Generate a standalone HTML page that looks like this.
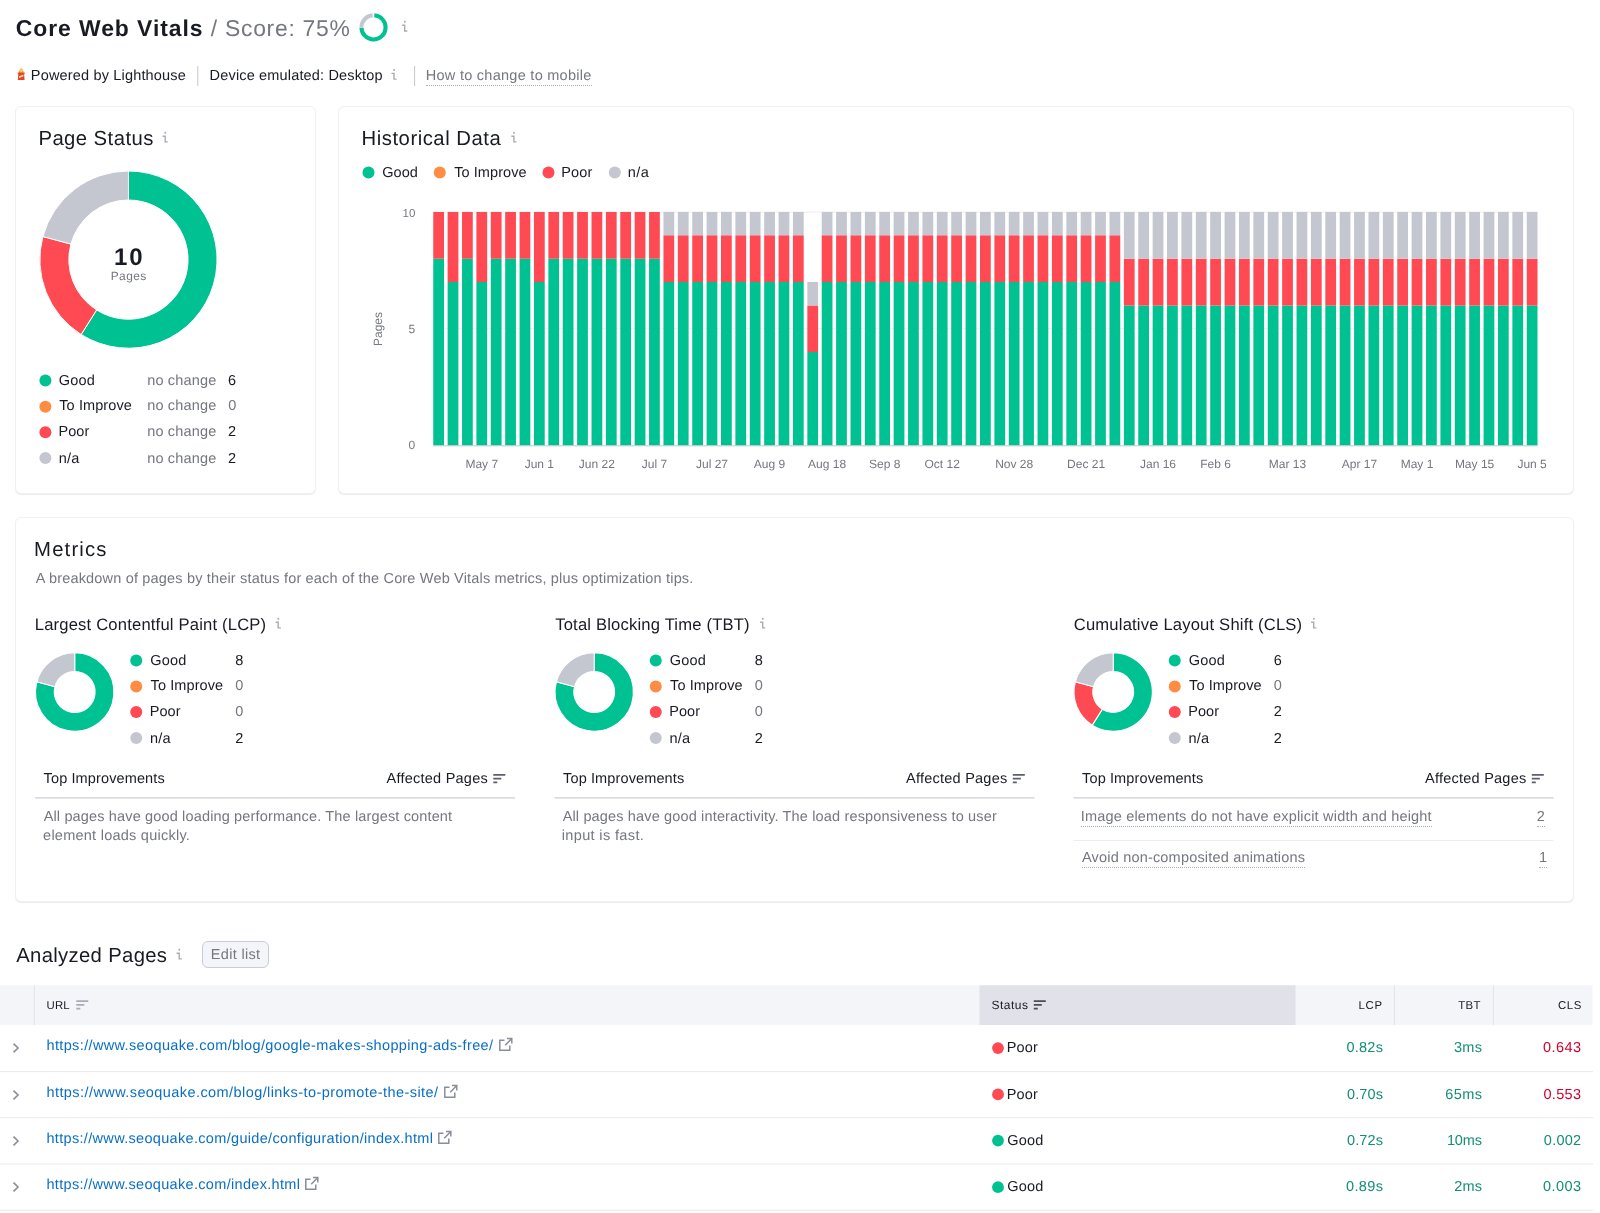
<!DOCTYPE html>
<html lang="en"><head><meta charset="utf-8"><title>Core Web Vitals</title>
<style>
html,body{margin:0;padding:0;background:#fff}
body{width:1600px;height:1213px;position:relative;overflow:hidden;font-family:"Liberation Sans", sans-serif;color:#191b23;text-rendering:geometricPrecision}
.txt{position:absolute;left:0;top:0;width:1600px;height:1213px;will-change:transform}
.t{position:absolute;white-space:nowrap;line-height:1;display:block}
.card{position:absolute;background:#fff;border:1px solid #f1f1f4;border-radius:6px;box-shadow:0 1px 0 #ededf0;box-sizing:border-box}
.btn{position:absolute;left:202.3px;top:941.2px;width:67.2px;height:27px;box-sizing:border-box;border:1px solid #c9ccd4;border-radius:6px;background:#f4f5f9}
svg{position:absolute;left:0;top:0;will-change:transform}
</style></head><body>
<div class="card" style="left:14.6px;top:106px;width:301.2px;height:388px"></div>
<div class="card" style="left:338px;top:106px;width:1236px;height:388px"></div>
<div class="card" style="left:15px;top:517px;width:1559px;height:385px"></div>
<div class="btn"></div>
<svg width="1600" height="1213" viewBox="0 0 1600 1213"><circle cx="373.5" cy="27.4" r="12.1" fill="none" stroke="#c4c7cf" stroke-width="4" stroke-dasharray="17.51 76.026542216873" transform="rotate(182 373.5 27.4)"/><circle cx="373.5" cy="27.4" r="12.1" fill="none" stroke="#00c192" stroke-width="4" stroke-dasharray="55.52 76.026542216873" transform="rotate(-86 373.5 27.4)"/><circle cx="404.80" cy="21.80" r="1" fill="#a9abb6"/><path d="M402.10 25.30h2.6v5.7h2.6" fill="none" stroke="#a9abb6" stroke-width="1.4"/><g transform="translate(17.6,67.6) scale(1,1.03)"><path d="M1.3 3.8Q3.6 -2.3 5.9 3.8L6 5H1.2Z" fill="#f29a3c"/><circle cx="3.6" cy="2.9" r="1.4" fill="#ffd65c"/><path d="M0.2 4.7h6.8v1.8h-0.5l0.5 5.6h-6.8l0.5-5.6h-0.5z" fill="#e8451c"/><path d="M1.4 8.6l4.4-1.9v1.6l-4.4 1.9z" fill="#fff" opacity=".9"/></g><path d="M197.8 66v20M414.6 66v20" stroke="#c4c7cf" stroke-width="1"/><circle cx="394.10" cy="69.90" r="1" fill="#a9abb6"/><path d="M391.40 73.40h2.6v5.7h2.6" fill="none" stroke="#a9abb6" stroke-width="1.4"/><circle cx="165.30" cy="132.70" r="1" fill="#a9abb6"/><path d="M162.60 136.20h2.6v5.7h2.6" fill="none" stroke="#a9abb6" stroke-width="1.4"/><path d="M128.45 171.00A88.6 88.6 0 1 1 81.12 334.50L96.61 309.98A59.6 59.6 0 1 0 128.45 200.00Z" fill="#00c192" stroke="#fff" stroke-width="1"/><path d="M81.12 334.50A88.6 88.6 0 0 1 42.90 236.54L70.90 244.09A59.6 59.6 0 0 0 96.61 309.98Z" fill="#ff4953" stroke="#fff" stroke-width="1"/><path d="M42.90 236.54A88.6 88.6 0 0 1 128.45 171.00L128.45 200.00A59.6 59.6 0 0 0 70.90 244.09Z" fill="#c4c7cf" stroke="#fff" stroke-width="1"/><circle cx="45.4" cy="380.6" r="6" fill="#00c192"/><circle cx="45.4" cy="406.7" r="6" fill="#ff8c43"/><circle cx="45.4" cy="432.2" r="6" fill="#ff4953"/><circle cx="45.4" cy="458.1" r="6" fill="#c4c7cf"/><circle cx="514.00" cy="132.70" r="1" fill="#a9abb6"/><path d="M511.30 136.20h2.6v5.7h2.6" fill="none" stroke="#a9abb6" stroke-width="1.4"/><circle cx="368.5" cy="172.5" r="6" fill="#00c192"/><circle cx="439.75" cy="172.5" r="6" fill="#ff8c43"/><circle cx="548.5" cy="172.5" r="6" fill="#ff4953"/><circle cx="614.8" cy="172.5" r="6" fill="#c4c7cf"/><path d="M433.25 212.0H1537.5M433.25 328.75H1537.5" stroke="#ececf0" stroke-width="1"/><path d="M433.25 445.5v-186.80h10.75v186.80zM447.64 445.5v-163.45h10.75v163.45zM462.03 445.5v-186.80h10.75v186.80zM476.41 445.5v-163.45h10.75v163.45zM490.80 445.5v-186.80h10.75v186.80zM505.19 445.5v-186.80h10.75v186.80zM519.58 445.5v-186.80h10.75v186.80zM533.97 445.5v-163.45h10.75v163.45zM548.36 445.5v-186.80h10.75v186.80zM562.74 445.5v-186.80h10.75v186.80zM577.13 445.5v-186.80h10.75v186.80zM591.52 445.5v-186.80h10.75v186.80zM605.91 445.5v-186.80h10.75v186.80zM620.30 445.5v-186.80h10.75v186.80zM634.68 445.5v-186.80h10.75v186.80zM649.07 445.5v-186.80h10.75v186.80zM663.46 445.5v-163.45h10.75v163.45zM677.85 445.5v-163.45h10.75v163.45zM692.24 445.5v-163.45h10.75v163.45zM706.62 445.5v-163.45h10.75v163.45zM721.01 445.5v-163.45h10.75v163.45zM735.40 445.5v-163.45h10.75v163.45zM749.79 445.5v-163.45h10.75v163.45zM764.18 445.5v-163.45h10.75v163.45zM778.57 445.5v-163.45h10.75v163.45zM792.95 445.5v-163.45h10.75v163.45zM807.34 445.5v-93.40h10.75v93.40zM821.73 445.5v-163.45h10.75v163.45zM836.12 445.5v-163.45h10.75v163.45zM850.51 445.5v-163.45h10.75v163.45zM864.89 445.5v-163.45h10.75v163.45zM879.28 445.5v-163.45h10.75v163.45zM893.67 445.5v-163.45h10.75v163.45zM908.06 445.5v-163.45h10.75v163.45zM922.45 445.5v-163.45h10.75v163.45zM936.84 445.5v-163.45h10.75v163.45zM951.22 445.5v-163.45h10.75v163.45zM965.61 445.5v-163.45h10.75v163.45zM980.00 445.5v-163.45h10.75v163.45zM994.39 445.5v-163.45h10.75v163.45zM1008.78 445.5v-163.45h10.75v163.45zM1023.16 445.5v-163.45h10.75v163.45zM1037.55 445.5v-163.45h10.75v163.45zM1051.94 445.5v-163.45h10.75v163.45zM1066.33 445.5v-163.45h10.75v163.45zM1080.72 445.5v-163.45h10.75v163.45zM1095.11 445.5v-163.45h10.75v163.45zM1109.49 445.5v-163.45h10.75v163.45zM1123.88 445.5v-140.10h10.75v140.10zM1138.27 445.5v-140.10h10.75v140.10zM1152.66 445.5v-140.10h10.75v140.10zM1167.05 445.5v-140.10h10.75v140.10zM1181.43 445.5v-140.10h10.75v140.10zM1195.82 445.5v-140.10h10.75v140.10zM1210.21 445.5v-140.10h10.75v140.10zM1224.60 445.5v-140.10h10.75v140.10zM1238.99 445.5v-140.10h10.75v140.10zM1253.38 445.5v-140.10h10.75v140.10zM1267.76 445.5v-140.10h10.75v140.10zM1282.15 445.5v-140.10h10.75v140.10zM1296.54 445.5v-140.10h10.75v140.10zM1310.93 445.5v-140.10h10.75v140.10zM1325.32 445.5v-140.10h10.75v140.10zM1339.70 445.5v-140.10h10.75v140.10zM1354.09 445.5v-140.10h10.75v140.10zM1368.48 445.5v-140.10h10.75v140.10zM1382.87 445.5v-140.10h10.75v140.10zM1397.26 445.5v-140.10h10.75v140.10zM1411.64 445.5v-140.10h10.75v140.10zM1426.03 445.5v-140.10h10.75v140.10zM1440.42 445.5v-140.10h10.75v140.10zM1454.81 445.5v-140.10h10.75v140.10zM1469.20 445.5v-140.10h10.75v140.10zM1483.59 445.5v-140.10h10.75v140.10zM1497.97 445.5v-140.10h10.75v140.10zM1512.36 445.5v-140.10h10.75v140.10zM1526.75 445.5v-140.10h10.75v140.10z" fill="#00c192"/><path d="M433.25 258.70v-46.70h10.75v46.70zM447.64 282.05v-70.05h10.75v70.05zM462.03 258.70v-46.70h10.75v46.70zM476.41 282.05v-70.05h10.75v70.05zM490.80 258.70v-46.70h10.75v46.70zM505.19 258.70v-46.70h10.75v46.70zM519.58 258.70v-46.70h10.75v46.70zM533.97 282.05v-70.05h10.75v70.05zM548.36 258.70v-46.70h10.75v46.70zM562.74 258.70v-46.70h10.75v46.70zM577.13 258.70v-46.70h10.75v46.70zM591.52 258.70v-46.70h10.75v46.70zM605.91 258.70v-46.70h10.75v46.70zM620.30 258.70v-46.70h10.75v46.70zM634.68 258.70v-46.70h10.75v46.70zM649.07 258.70v-46.70h10.75v46.70zM663.46 282.05v-46.70h10.75v46.70zM677.85 282.05v-46.70h10.75v46.70zM692.24 282.05v-46.70h10.75v46.70zM706.62 282.05v-46.70h10.75v46.70zM721.01 282.05v-46.70h10.75v46.70zM735.40 282.05v-46.70h10.75v46.70zM749.79 282.05v-46.70h10.75v46.70zM764.18 282.05v-46.70h10.75v46.70zM778.57 282.05v-46.70h10.75v46.70zM792.95 282.05v-46.70h10.75v46.70zM807.34 352.10v-46.70h10.75v46.70zM821.73 282.05v-46.70h10.75v46.70zM836.12 282.05v-46.70h10.75v46.70zM850.51 282.05v-46.70h10.75v46.70zM864.89 282.05v-46.70h10.75v46.70zM879.28 282.05v-46.70h10.75v46.70zM893.67 282.05v-46.70h10.75v46.70zM908.06 282.05v-46.70h10.75v46.70zM922.45 282.05v-46.70h10.75v46.70zM936.84 282.05v-46.70h10.75v46.70zM951.22 282.05v-46.70h10.75v46.70zM965.61 282.05v-46.70h10.75v46.70zM980.00 282.05v-46.70h10.75v46.70zM994.39 282.05v-46.70h10.75v46.70zM1008.78 282.05v-46.70h10.75v46.70zM1023.16 282.05v-46.70h10.75v46.70zM1037.55 282.05v-46.70h10.75v46.70zM1051.94 282.05v-46.70h10.75v46.70zM1066.33 282.05v-46.70h10.75v46.70zM1080.72 282.05v-46.70h10.75v46.70zM1095.11 282.05v-46.70h10.75v46.70zM1109.49 282.05v-46.70h10.75v46.70zM1123.88 305.40v-46.70h10.75v46.70zM1138.27 305.40v-46.70h10.75v46.70zM1152.66 305.40v-46.70h10.75v46.70zM1167.05 305.40v-46.70h10.75v46.70zM1181.43 305.40v-46.70h10.75v46.70zM1195.82 305.40v-46.70h10.75v46.70zM1210.21 305.40v-46.70h10.75v46.70zM1224.60 305.40v-46.70h10.75v46.70zM1238.99 305.40v-46.70h10.75v46.70zM1253.38 305.40v-46.70h10.75v46.70zM1267.76 305.40v-46.70h10.75v46.70zM1282.15 305.40v-46.70h10.75v46.70zM1296.54 305.40v-46.70h10.75v46.70zM1310.93 305.40v-46.70h10.75v46.70zM1325.32 305.40v-46.70h10.75v46.70zM1339.70 305.40v-46.70h10.75v46.70zM1354.09 305.40v-46.70h10.75v46.70zM1368.48 305.40v-46.70h10.75v46.70zM1382.87 305.40v-46.70h10.75v46.70zM1397.26 305.40v-46.70h10.75v46.70zM1411.64 305.40v-46.70h10.75v46.70zM1426.03 305.40v-46.70h10.75v46.70zM1440.42 305.40v-46.70h10.75v46.70zM1454.81 305.40v-46.70h10.75v46.70zM1469.20 305.40v-46.70h10.75v46.70zM1483.59 305.40v-46.70h10.75v46.70zM1497.97 305.40v-46.70h10.75v46.70zM1512.36 305.40v-46.70h10.75v46.70zM1526.75 305.40v-46.70h10.75v46.70z" fill="#ff4953"/><path d="M663.46 235.35v-23.35h10.75v23.35zM677.85 235.35v-23.35h10.75v23.35zM692.24 235.35v-23.35h10.75v23.35zM706.62 235.35v-23.35h10.75v23.35zM721.01 235.35v-23.35h10.75v23.35zM735.40 235.35v-23.35h10.75v23.35zM749.79 235.35v-23.35h10.75v23.35zM764.18 235.35v-23.35h10.75v23.35zM778.57 235.35v-23.35h10.75v23.35zM792.95 235.35v-23.35h10.75v23.35zM807.34 305.40v-23.35h10.75v23.35zM821.73 235.35v-23.35h10.75v23.35zM836.12 235.35v-23.35h10.75v23.35zM850.51 235.35v-23.35h10.75v23.35zM864.89 235.35v-23.35h10.75v23.35zM879.28 235.35v-23.35h10.75v23.35zM893.67 235.35v-23.35h10.75v23.35zM908.06 235.35v-23.35h10.75v23.35zM922.45 235.35v-23.35h10.75v23.35zM936.84 235.35v-23.35h10.75v23.35zM951.22 235.35v-23.35h10.75v23.35zM965.61 235.35v-23.35h10.75v23.35zM980.00 235.35v-23.35h10.75v23.35zM994.39 235.35v-23.35h10.75v23.35zM1008.78 235.35v-23.35h10.75v23.35zM1023.16 235.35v-23.35h10.75v23.35zM1037.55 235.35v-23.35h10.75v23.35zM1051.94 235.35v-23.35h10.75v23.35zM1066.33 235.35v-23.35h10.75v23.35zM1080.72 235.35v-23.35h10.75v23.35zM1095.11 235.35v-23.35h10.75v23.35zM1109.49 235.35v-23.35h10.75v23.35zM1123.88 258.70v-46.70h10.75v46.70zM1138.27 258.70v-46.70h10.75v46.70zM1152.66 258.70v-46.70h10.75v46.70zM1167.05 258.70v-46.70h10.75v46.70zM1181.43 258.70v-46.70h10.75v46.70zM1195.82 258.70v-46.70h10.75v46.70zM1210.21 258.70v-46.70h10.75v46.70zM1224.60 258.70v-46.70h10.75v46.70zM1238.99 258.70v-46.70h10.75v46.70zM1253.38 258.70v-46.70h10.75v46.70zM1267.76 258.70v-46.70h10.75v46.70zM1282.15 258.70v-46.70h10.75v46.70zM1296.54 258.70v-46.70h10.75v46.70zM1310.93 258.70v-46.70h10.75v46.70zM1325.32 258.70v-46.70h10.75v46.70zM1339.70 258.70v-46.70h10.75v46.70zM1354.09 258.70v-46.70h10.75v46.70zM1368.48 258.70v-46.70h10.75v46.70zM1382.87 258.70v-46.70h10.75v46.70zM1397.26 258.70v-46.70h10.75v46.70zM1411.64 258.70v-46.70h10.75v46.70zM1426.03 258.70v-46.70h10.75v46.70zM1440.42 258.70v-46.70h10.75v46.70zM1454.81 258.70v-46.70h10.75v46.70zM1469.20 258.70v-46.70h10.75v46.70zM1483.59 258.70v-46.70h10.75v46.70zM1497.97 258.70v-46.70h10.75v46.70zM1512.36 258.70v-46.70h10.75v46.70zM1526.75 258.70v-46.70h10.75v46.70z" fill="#c4c7cf"/><path d="M433.25 445.8H1537.5" stroke="#c4c7cf" stroke-width="1"/><g font-family='"Liberation Sans", sans-serif' font-size="12" fill="#75777f"><text x="481.79" y="468.3" text-anchor="middle">May 7</text><text x="539.34" y="468.3" text-anchor="middle">Jun 1</text><text x="596.89" y="468.3" text-anchor="middle">Jun 22</text><text x="654.45" y="468.3" text-anchor="middle">Jul 7</text><text x="712.00" y="468.3" text-anchor="middle">Jul 27</text><text x="769.55" y="468.3" text-anchor="middle">Aug 9</text><text x="827.11" y="468.3" text-anchor="middle">Aug 18</text><text x="884.66" y="468.3" text-anchor="middle">Sep 8</text><text x="942.21" y="468.3" text-anchor="middle">Oct 12</text><text x="1014.15" y="468.3" text-anchor="middle">Nov 28</text><text x="1086.09" y="468.3" text-anchor="middle">Dec 21</text><text x="1158.03" y="468.3" text-anchor="middle">Jan 16</text><text x="1215.59" y="468.3" text-anchor="middle">Feb 6</text><text x="1287.53" y="468.3" text-anchor="middle">Mar 13</text><text x="1359.47" y="468.3" text-anchor="middle">Apr 17</text><text x="1417.02" y="468.3" text-anchor="middle">May 1</text><text x="1474.57" y="468.3" text-anchor="middle">May 15</text><text x="1532.12" y="468.3" text-anchor="middle">Jun 5</text><text transform="translate(382.3,329) rotate(-90)" text-anchor="middle" font-size="12">Pages</text></g><path d="M74.70 652.80A39.2 39.2 0 1 1 36.86 681.78L55.01 686.68A20.4 20.4 0 1 0 74.70 671.60Z" fill="#00c192" stroke="#fff" stroke-width="1.1"/><path d="M36.86 681.78A39.2 39.2 0 0 1 74.70 652.80L74.70 671.60A20.4 20.4 0 0 0 55.01 686.68Z" fill="#c4c7cf" stroke="#fff" stroke-width="1.1"/><circle cx="136.25" cy="660.6" r="6" fill="#00c192"/><circle cx="136.25" cy="686.6" r="6" fill="#ff8c43"/><circle cx="136.25" cy="711.9" r="6" fill="#ff4953"/><circle cx="136.25" cy="738.1" r="6" fill="#c4c7cf"/><circle cx="278.30" cy="618.70" r="1" fill="#a9abb6"/><path d="M275.60 622.20h2.6v5.7h2.6" fill="none" stroke="#a9abb6" stroke-width="1.4"/><path d="M493.3 774.9h12M493.3 778.6h8M493.3 782.3h4" stroke="#5d606b" stroke-width="1.7" fill="none"/><path d="M35.0 797.9h480" stroke="#cdcfd6" stroke-width="1.4"/><path d="M594.20 652.80A39.2 39.2 0 1 1 556.36 681.78L574.51 686.68A20.4 20.4 0 1 0 594.20 671.60Z" fill="#00c192" stroke="#fff" stroke-width="1.1"/><path d="M556.36 681.78A39.2 39.2 0 0 1 594.20 652.80L594.20 671.60A20.4 20.4 0 0 0 574.51 686.68Z" fill="#c4c7cf" stroke="#fff" stroke-width="1.1"/><circle cx="655.75" cy="660.6" r="6" fill="#00c192"/><circle cx="655.75" cy="686.6" r="6" fill="#ff8c43"/><circle cx="655.75" cy="711.9" r="6" fill="#ff4953"/><circle cx="655.75" cy="738.1" r="6" fill="#c4c7cf"/><circle cx="762.80" cy="618.70" r="1" fill="#a9abb6"/><path d="M760.10 622.20h2.6v5.7h2.6" fill="none" stroke="#a9abb6" stroke-width="1.4"/><path d="M1012.8 774.9h12M1012.8 778.6h8M1012.8 782.3h4" stroke="#5d606b" stroke-width="1.7" fill="none"/><path d="M554.5 797.9h480" stroke="#cdcfd6" stroke-width="1.4"/><path d="M1113.20 652.80A39.2 39.2 0 1 1 1092.26 725.14L1102.30 709.24A20.4 20.4 0 1 0 1113.20 671.60Z" fill="#00c192" stroke="#fff" stroke-width="1.1"/><path d="M1092.26 725.14A39.2 39.2 0 0 1 1075.35 681.80L1093.50 686.69A20.4 20.4 0 0 0 1102.30 709.24Z" fill="#ff4953" stroke="#fff" stroke-width="1.1"/><path d="M1075.35 681.80A39.2 39.2 0 0 1 1113.20 652.80L1113.20 671.60A20.4 20.4 0 0 0 1093.50 686.69Z" fill="#c4c7cf" stroke="#fff" stroke-width="1.1"/><circle cx="1174.75" cy="660.6" r="6" fill="#00c192"/><circle cx="1174.75" cy="686.6" r="6" fill="#ff8c43"/><circle cx="1174.75" cy="711.9" r="6" fill="#ff4953"/><circle cx="1174.75" cy="738.1" r="6" fill="#c4c7cf"/><circle cx="1313.80" cy="618.70" r="1" fill="#a9abb6"/><path d="M1311.10 622.20h2.6v5.7h2.6" fill="none" stroke="#a9abb6" stroke-width="1.4"/><path d="M1531.8 774.9h12M1531.8 778.6h8M1531.8 782.3h4" stroke="#5d606b" stroke-width="1.7" fill="none"/><path d="M1073.5 797.9h480" stroke="#cdcfd6" stroke-width="1.4"/><path d="M1073.5 840.5h480" stroke="#ecedf1" stroke-width="1"/><rect x="0" y="985.3" width="1592.6" height="39.7" fill="#f4f5f9"/><rect x="979.5" y="985.3" width="316" height="39.7" fill="#e0e1e9"/><path d="M34.3 985.3v39.7M1394.4 985.3v39.7M1493.4 985.3v39.7" stroke="#e2e3e9" stroke-width="1"/><rect x="0" y="1071" width="1593" height="1.1" fill="#ebecf0"/><rect x="0" y="1117" width="1593" height="1.1" fill="#ebecf0"/><rect x="0" y="1163.4" width="1593" height="1.1" fill="#ebecf0"/><rect x="0" y="1209.7" width="1593" height="1.1" fill="#ebecf0"/><circle cx="179.30" cy="949.70" r="1" fill="#a9abb6"/><path d="M176.60 953.20h2.6v5.7h2.6" fill="none" stroke="#a9abb6" stroke-width="1.4"/><path d="M76.3 1001.1999999999999h12M76.3 1004.9h8M76.3 1008.5999999999999h4" stroke="#a9abb6" stroke-width="1.7" fill="none"/><path d="M1033.8 1001.1999999999999h12M1033.8 1004.9h8M1033.8 1008.5999999999999h4" stroke="#4a4d58" stroke-width="1.7" fill="none"/><path d="M504.5 1040.3h-4.7v10h10v-4.7" fill="none" stroke="#8a8e9b" stroke-width="1.5"/><path d="M507 1038.6h4.8v4.8M511.6 1038.8l-6.4 6.4" fill="none" stroke="#8a8e9b" stroke-width="1.5"/><path d="M13.5 1043.7l4.5 4.3l-4.5 4.3" fill="none" stroke="#8a8e9b" stroke-width="1.6"/><circle cx="998" cy="1048.1" r="5.9" fill="#ff4953"/><path d="M449.5 1087.3h-4.7v10h10v-4.7" fill="none" stroke="#8a8e9b" stroke-width="1.5"/><path d="M452 1085.6h4.8v4.8M456.6 1085.8l-6.4 6.4" fill="none" stroke="#8a8e9b" stroke-width="1.5"/><path d="M13.5 1090.7l4.5 4.3l-4.5 4.3" fill="none" stroke="#8a8e9b" stroke-width="1.6"/><circle cx="998" cy="1094.4" r="5.9" fill="#ff4953"/><path d="M443.5 1133.3h-4.7v10h10v-4.7" fill="none" stroke="#8a8e9b" stroke-width="1.5"/><path d="M446 1131.6h4.8v4.8M450.6 1131.8l-6.4 6.4" fill="none" stroke="#8a8e9b" stroke-width="1.5"/><path d="M13.5 1136.7l4.5 4.3l-4.5 4.3" fill="none" stroke="#8a8e9b" stroke-width="1.6"/><circle cx="998" cy="1140.6" r="5.9" fill="#00c192"/><path d="M310.5 1179.3h-4.7v10h10v-4.7" fill="none" stroke="#8a8e9b" stroke-width="1.5"/><path d="M313 1177.6h4.8v4.8M317.6 1177.8l-6.4 6.4" fill="none" stroke="#8a8e9b" stroke-width="1.5"/><path d="M13.5 1182.7l4.5 4.3l-4.5 4.3" fill="none" stroke="#8a8e9b" stroke-width="1.6"/><circle cx="998" cy="1187.2" r="5.9" fill="#00c192"/></svg>
<main class="txt">
<span class="t" style="left:15.76px;top:17.00px;font-size:22.9px;color:#191b23;font-weight:700;letter-spacing:0.953px;">Core Web Vitals</span>
<span class="t" style="left:210.80px;top:17.00px;font-size:22.9px;color:#75777f;font-weight:400;letter-spacing:0.724px;">/ Score: 75%</span>
<span class="t" style="left:30.81px;top:69.00px;font-size:14.5px;color:#191b23;font-weight:400;letter-spacing:0.174px;">Powered by Lighthouse</span>
<span class="t" style="left:209.61px;top:69.00px;font-size:14.5px;color:#191b23;font-weight:400;letter-spacing:0.163px;">Device emulated: Desktop</span>
<span class="t" style="left:425.81px;top:69.00px;font-size:14.5px;color:#75777f;font-weight:400;letter-spacing:0.270px;border-bottom:1px dotted #aeb0ba;padding-bottom:1.6px;">How to change to mobile</span>
<span class="t" style="left:38.43px;top:129.00px;font-size:20.3px;color:#191b23;font-weight:400;letter-spacing:0.440px;">Page Status</span>
<span class="t" style="left:114.09px;top:246.00px;font-size:24px;color:#191b23;font-weight:700;letter-spacing:1.801px;">10</span>
<span class="t" style="left:110.72px;top:270.00px;font-size:12px;color:#75777f;font-weight:400;letter-spacing:0.373px;">Pages</span>
<span class="t" style="left:58.87px;top:374.00px;font-size:14.5px;color:#191b23;font-weight:400;letter-spacing:0.198px;">Good</span>
<span class="t" style="left:147.14px;top:374.00px;font-size:14.5px;color:#75777f;font-weight:400;letter-spacing:0.197px;">no change</span>
<span class="t" style="left:227.96px;top:374.00px;font-size:14.5px;color:#191b23;font-weight:400;letter-spacing:0.000px;">6</span>
<span class="t" style="left:59.27px;top:399.00px;font-size:14.5px;color:#191b23;font-weight:400;letter-spacing:0.094px;">To Improve</span>
<span class="t" style="left:147.14px;top:399.00px;font-size:14.5px;color:#75777f;font-weight:400;letter-spacing:0.197px;">no change</span>
<span class="t" style="left:228.13px;top:399.00px;font-size:14.5px;color:#75777f;font-weight:400;letter-spacing:0.000px;">0</span>
<span class="t" style="left:58.41px;top:425.00px;font-size:14.5px;color:#191b23;font-weight:400;letter-spacing:0.067px;">Poor</span>
<span class="t" style="left:147.14px;top:425.00px;font-size:14.5px;color:#75777f;font-weight:400;letter-spacing:0.197px;">no change</span>
<span class="t" style="left:227.97px;top:425.00px;font-size:14.5px;color:#191b23;font-weight:400;letter-spacing:0.000px;">2</span>
<span class="t" style="left:58.64px;top:452.00px;font-size:14.5px;color:#191b23;font-weight:400;letter-spacing:0.253px;">n/a</span>
<span class="t" style="left:147.14px;top:452.00px;font-size:14.5px;color:#75777f;font-weight:400;letter-spacing:0.197px;">no change</span>
<span class="t" style="left:227.97px;top:452.00px;font-size:14.5px;color:#191b23;font-weight:400;letter-spacing:0.000px;">2</span>
<span class="t" style="left:361.58px;top:129.00px;font-size:20.3px;color:#191b23;font-weight:400;letter-spacing:0.521px;">Historical Data</span>
<span class="t" style="left:382.27px;top:166.00px;font-size:14.5px;color:#191b23;font-weight:400;letter-spacing:0.064px;">Good</span>
<span class="t" style="left:454.17px;top:166.00px;font-size:14.5px;color:#191b23;font-weight:400;letter-spacing:0.083px;">To Improve</span>
<span class="t" style="left:561.31px;top:166.00px;font-size:14.5px;color:#191b23;font-weight:400;letter-spacing:0.101px;">Poor</span>
<span class="t" style="left:627.79px;top:166.00px;font-size:14.5px;color:#191b23;font-weight:400;letter-spacing:0.403px;">n/a</span>
<span class="t" style="left:402.62px;top:209.00px;font-size:11.5px;color:#75777f;font-weight:400;letter-spacing:0.034px;">10</span>
<span class="t" style="left:408.52px;top:323.00px;font-size:12px;color:#75777f;font-weight:400;letter-spacing:0.000px;">5</span>
<span class="t" style="left:408.53px;top:439.00px;font-size:12px;color:#75777f;font-weight:400;letter-spacing:0.000px;">0</span>
<span class="t" style="left:34.08px;top:540.00px;font-size:20.3px;color:#191b23;font-weight:400;letter-spacing:1.175px;">Metrics</span>
<span class="t" style="left:35.72px;top:572.00px;font-size:14.5px;color:#75777f;font-weight:400;letter-spacing:0.174px;">A breakdown of pages by their status for each of the Core Web Vitals metrics, plus optimization tips.</span>
<span class="t" style="left:34.74px;top:617.00px;font-size:16.6px;color:#191b23;font-weight:400;letter-spacing:0.185px;">Largest Contentful Paint (LCP)</span>
<span class="t" style="left:150.17px;top:654.00px;font-size:14.5px;color:#191b23;font-weight:400;letter-spacing:0.198px;">Good</span>
<span class="t" style="left:235.27px;top:654.00px;font-size:14.5px;color:#191b23;font-weight:400;letter-spacing:0.000px;">8</span>
<span class="t" style="left:150.57px;top:679.00px;font-size:14.5px;color:#191b23;font-weight:400;letter-spacing:0.094px;">To Improve</span>
<span class="t" style="left:235.33px;top:679.00px;font-size:14.5px;color:#75777f;font-weight:400;letter-spacing:0.000px;">0</span>
<span class="t" style="left:149.71px;top:705.00px;font-size:14.5px;color:#191b23;font-weight:400;letter-spacing:0.067px;">Poor</span>
<span class="t" style="left:235.33px;top:705.00px;font-size:14.5px;color:#75777f;font-weight:400;letter-spacing:0.000px;">0</span>
<span class="t" style="left:149.94px;top:732.00px;font-size:14.5px;color:#191b23;font-weight:400;letter-spacing:0.253px;">n/a</span>
<span class="t" style="left:235.17px;top:732.00px;font-size:14.5px;color:#191b23;font-weight:400;letter-spacing:0.000px;">2</span>
<span class="t" style="left:43.57px;top:772.00px;font-size:14.5px;color:#191b23;font-weight:400;letter-spacing:0.125px;">Top Improvements</span>
<span class="t" style="left:386.47px;top:772.00px;font-size:14.5px;color:#191b23;font-weight:400;letter-spacing:0.244px;">Affected Pages</span>
<span class="t" style="left:555.23px;top:617.00px;font-size:16.6px;color:#191b23;font-weight:400;letter-spacing:0.183px;">Total Blocking Time (TBT)</span>
<span class="t" style="left:669.67px;top:654.00px;font-size:14.5px;color:#191b23;font-weight:400;letter-spacing:0.198px;">Good</span>
<span class="t" style="left:754.77px;top:654.00px;font-size:14.5px;color:#191b23;font-weight:400;letter-spacing:0.000px;">8</span>
<span class="t" style="left:670.07px;top:679.00px;font-size:14.5px;color:#191b23;font-weight:400;letter-spacing:0.094px;">To Improve</span>
<span class="t" style="left:754.83px;top:679.00px;font-size:14.5px;color:#75777f;font-weight:400;letter-spacing:0.000px;">0</span>
<span class="t" style="left:669.21px;top:705.00px;font-size:14.5px;color:#191b23;font-weight:400;letter-spacing:0.067px;">Poor</span>
<span class="t" style="left:754.83px;top:705.00px;font-size:14.5px;color:#75777f;font-weight:400;letter-spacing:0.000px;">0</span>
<span class="t" style="left:669.44px;top:732.00px;font-size:14.5px;color:#191b23;font-weight:400;letter-spacing:0.253px;">n/a</span>
<span class="t" style="left:754.67px;top:732.00px;font-size:14.5px;color:#191b23;font-weight:400;letter-spacing:0.000px;">2</span>
<span class="t" style="left:563.07px;top:772.00px;font-size:14.5px;color:#191b23;font-weight:400;letter-spacing:0.125px;">Top Improvements</span>
<span class="t" style="left:905.97px;top:772.00px;font-size:14.5px;color:#191b23;font-weight:400;letter-spacing:0.244px;">Affected Pages</span>
<span class="t" style="left:1073.76px;top:617.00px;font-size:16.6px;color:#191b23;font-weight:400;letter-spacing:0.185px;">Cumulative Layout Shift (CLS)</span>
<span class="t" style="left:1188.67px;top:654.00px;font-size:14.5px;color:#191b23;font-weight:400;letter-spacing:0.198px;">Good</span>
<span class="t" style="left:1273.66px;top:654.00px;font-size:14.5px;color:#191b23;font-weight:400;letter-spacing:0.000px;">6</span>
<span class="t" style="left:1189.07px;top:679.00px;font-size:14.5px;color:#191b23;font-weight:400;letter-spacing:0.094px;">To Improve</span>
<span class="t" style="left:1273.83px;top:679.00px;font-size:14.5px;color:#75777f;font-weight:400;letter-spacing:0.000px;">0</span>
<span class="t" style="left:1188.21px;top:705.00px;font-size:14.5px;color:#191b23;font-weight:400;letter-spacing:0.067px;">Poor</span>
<span class="t" style="left:1273.67px;top:705.00px;font-size:14.5px;color:#191b23;font-weight:400;letter-spacing:0.000px;">2</span>
<span class="t" style="left:1188.44px;top:732.00px;font-size:14.5px;color:#191b23;font-weight:400;letter-spacing:0.253px;">n/a</span>
<span class="t" style="left:1273.67px;top:732.00px;font-size:14.5px;color:#191b23;font-weight:400;letter-spacing:0.000px;">2</span>
<span class="t" style="left:1082.07px;top:772.00px;font-size:14.5px;color:#191b23;font-weight:400;letter-spacing:0.125px;">Top Improvements</span>
<span class="t" style="left:1424.97px;top:772.00px;font-size:14.5px;color:#191b23;font-weight:400;letter-spacing:0.244px;">Affected Pages</span>
<span class="t" style="left:43.67px;top:810.00px;font-size:14.5px;color:#75777f;font-weight:400;letter-spacing:0.151px;">All pages have good loading performance. The largest content</span>
<span class="t" style="left:43.08px;top:829.00px;font-size:14.5px;color:#75777f;font-weight:400;letter-spacing:0.246px;">element loads quickly.</span>
<span class="t" style="left:562.67px;top:810.00px;font-size:14.5px;color:#75777f;font-weight:400;letter-spacing:0.151px;">All pages have good interactivity. The load responsiveness to user</span>
<span class="t" style="left:561.73px;top:829.00px;font-size:14.5px;color:#75777f;font-weight:400;letter-spacing:0.363px;">input is fast.</span>
<span class="t" style="left:1080.66px;top:810.00px;font-size:14.5px;color:#75777f;font-weight:400;letter-spacing:0.196px;border-bottom:1px dotted #aeb0ba;padding-bottom:1.6px;">Image elements do not have explicit width and height</span>
<span class="t" style="left:1536.77px;top:810.00px;font-size:14.5px;color:#75777f;font-weight:400;letter-spacing:0.000px;border-bottom:1px dotted #aeb0ba;padding-bottom:1.6px;">2</span>
<span class="t" style="left:1081.97px;top:851.00px;font-size:14.5px;color:#75777f;font-weight:400;letter-spacing:0.190px;border-bottom:1px dotted #aeb0ba;padding-bottom:1.6px;">Avoid non-composited animations</span>
<span class="t" style="left:1538.90px;top:851.00px;font-size:14.5px;color:#75777f;font-weight:400;letter-spacing:0.000px;border-bottom:1px dotted #aeb0ba;padding-bottom:1.6px;">1</span>
<span class="t" style="left:16.21px;top:946.00px;font-size:20.3px;color:#191b23;font-weight:400;letter-spacing:0.323px;">Analyzed Pages</span>
<span class="t" style="left:210.81px;top:948.00px;font-size:14.5px;color:#75777f;font-weight:400;letter-spacing:0.320px;">Edit list</span>
<span class="t" style="left:46.62px;top:1001.00px;font-size:11.4px;color:#191b23;font-weight:400;letter-spacing:0.111px;">URL</span>
<span class="t" style="left:991.46px;top:999.00px;font-size:12px;color:#191b23;font-weight:400;letter-spacing:0.492px;">Status</span>
<span class="t" style="left:1358.46px;top:1001.00px;font-size:11.4px;color:#191b23;font-weight:400;letter-spacing:0.789px;">LCP</span>
<span class="t" style="left:1458.34px;top:1001.00px;font-size:11.4px;color:#191b23;font-weight:400;letter-spacing:0.302px;">TBT</span>
<span class="t" style="left:1558.02px;top:1001.00px;font-size:11.4px;color:#191b23;font-weight:400;letter-spacing:0.572px;">CLS</span>
<span class="t" style="left:46.49px;top:1039.00px;font-size:14.5px;color:#0a6fc4;font-weight:400;letter-spacing:0.363px;">https://www.seoquake.com/blog/google-makes-shopping-ads-free/</span>
<span class="t" style="left:1006.81px;top:1041.00px;font-size:14.5px;color:#191b23;font-weight:400;letter-spacing:0.101px;">Poor</span>
<span class="t" style="left:1346.43px;top:1041.00px;font-size:14.5px;color:#148f74;font-weight:400;letter-spacing:0.255px;">0.82s</span>
<span class="t" style="left:1454.05px;top:1041.00px;font-size:14.5px;color:#148f74;font-weight:400;letter-spacing:0.242px;">3ms</span>
<span class="t" style="left:1543.03px;top:1041.00px;font-size:14.5px;color:#d1002f;font-weight:400;letter-spacing:0.430px;">0.643</span>
<span class="t" style="left:46.49px;top:1086.00px;font-size:14.5px;color:#0a6fc4;font-weight:400;letter-spacing:0.422px;">https://www.seoquake.com/blog/links-to-promote-the-site/</span>
<span class="t" style="left:1006.81px;top:1088.00px;font-size:14.5px;color:#191b23;font-weight:400;letter-spacing:0.101px;">Poor</span>
<span class="t" style="left:1347.03px;top:1088.00px;font-size:14.5px;color:#148f74;font-weight:400;letter-spacing:0.105px;">0.70s</span>
<span class="t" style="left:1445.26px;top:1088.00px;font-size:14.5px;color:#148f74;font-weight:400;letter-spacing:0.401px;">65ms</span>
<span class="t" style="left:1543.43px;top:1088.00px;font-size:14.5px;color:#d1002f;font-weight:400;letter-spacing:0.330px;">0.553</span>
<span class="t" style="left:46.49px;top:1132.00px;font-size:14.5px;color:#0a6fc4;font-weight:400;letter-spacing:0.321px;">https://www.seoquake.com/guide/configuration/index.html</span>
<span class="t" style="left:1007.27px;top:1134.00px;font-size:14.5px;color:#191b23;font-weight:400;letter-spacing:0.231px;">Good</span>
<span class="t" style="left:1347.03px;top:1134.00px;font-size:14.5px;color:#148f74;font-weight:400;letter-spacing:0.105px;">0.72s</span>
<span class="t" style="left:1446.90px;top:1134.00px;font-size:14.5px;color:#148f74;font-weight:400;letter-spacing:-0.143px;">10ms</span>
<span class="t" style="left:1543.83px;top:1134.00px;font-size:14.5px;color:#148f74;font-weight:400;letter-spacing:0.253px;">0.002</span>
<span class="t" style="left:46.49px;top:1178.00px;font-size:14.5px;color:#0a6fc4;font-weight:400;letter-spacing:0.320px;">https://www.seoquake.com/index.html</span>
<span class="t" style="left:1007.27px;top:1180.00px;font-size:14.5px;color:#191b23;font-weight:400;letter-spacing:0.231px;">Good</span>
<span class="t" style="left:1346.03px;top:1180.00px;font-size:14.5px;color:#148f74;font-weight:400;letter-spacing:0.355px;">0.89s</span>
<span class="t" style="left:1454.27px;top:1180.00px;font-size:14.5px;color:#148f74;font-weight:400;letter-spacing:0.130px;">2ms</span>
<span class="t" style="left:1543.03px;top:1180.00px;font-size:14.5px;color:#148f74;font-weight:400;letter-spacing:0.430px;">0.003</span>
</main>
</body></html>
